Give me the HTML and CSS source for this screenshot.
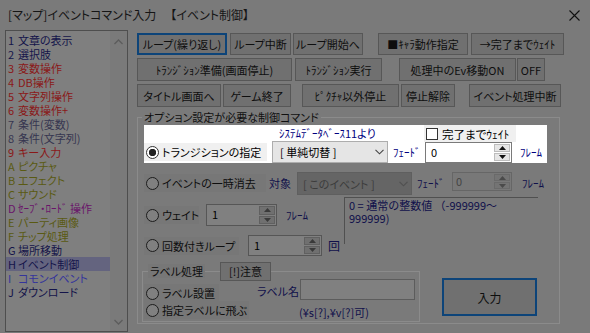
FILE: index.html
```html
<!DOCTYPE html>
<html lang="ja">
<head>
    <meta charset="UTF-8">
    <title>[マップ]イベントコマンド入力</title>
    <link rel="stylesheet" href="styles.css">
</head>
<body>
    <div class="dialog">
        <div class="titlebar">
            <span class="title">[マップ]イベントコマンド入力<span class="sub">【イベント制御】</span></span>
            <svg class="close" width="11" height="11" viewBox="0 0 11 11"><path d="M0.5 0.5L10.5 10.5M10.5 0.5L0.5 10.5" stroke="#111" stroke-width="1.1"/></svg>
        </div>
        <div class="main">
            <div class="cmdlist">
                <ul class="items">
                    <li class="navy"><span class="no">1</span>文章の表示</li>
                    <li class="navy"><span class="no">2</span>選択肢</li>
                    <li class="red"><span class="no">3</span>変数操作</li>
                    <li class="red"><span class="no">4</span>DB操作</li>
                    <li class="red"><span class="no">5</span>文字列操作</li>
                    <li class="red"><span class="no">6</span>変数操作+</li>
                    <li class="slate"><span class="no">7</span>条件(変数)</li>
                    <li class="slate"><span class="no">8</span>条件(文字列)</li>
                    <li class="red"><span class="no">9</span>キー入力</li>
                    <li class="olive"><span class="no">A</span>ピクチャ</li>
                    <li class="olive"><span class="no">B</span>エフェクト</li>
                    <li class="olive"><span class="no">C</span>サウンド</li>
                    <li class="purple"><span class="no">D</span>ｾｰﾌﾞ・ﾛｰﾄﾞ 操作</li>
                    <li class="olive"><span class="no">E</span>パーティ画像</li>
                    <li class="olive"><span class="no">F</span>チップ処理</li>
                    <li class="navy"><span class="no">G</span>場所移動</li>
                    <li class="navy selected"><span class="no">H</span>イベント制御</li>
                    <li class="blue"><span class="no">I</span>コモンイベント</li>
                    <li class="navy"><span class="no">J</span>ダウンロード</li>
                </ul>
                <div class="vscroll">
                    <svg width="9" height="6" viewBox="0 0 9 6"><path d="M0.5 5L4.5 1L8.5 5" fill="none" stroke="#5c5c5c" stroke-width="1.3"/></svg>
                    <svg width="9" height="6" viewBox="0 0 9 6"><path d="M0.5 1L4.5 5L8.5 1" fill="none" stroke="#5c5c5c" stroke-width="1.3"/></svg>
                </div>
            </div>

            <div class="panel">
                <div class="btnrow">
                    <button class="btn focus b-loop">ループ(繰り返し)</button>
                    <button class="btn b-loopbreak">ループ中断</button>
                    <button class="btn b-loopstart">ループ開始へ</button>
                    <button class="btn b-chara">■ｷｬﾗ動作指定</button>
                    <button class="btn b-waitend">→完了までｳｪｲﾄ</button>
                </div>
                <div class="btnrow">
                    <button class="btn b-trprep">ﾄﾗﾝｼﾞｼｮﾝ準備(画面停止)</button>
                    <button class="btn b-trrun">ﾄﾗﾝｼﾞｼｮﾝ実行</button>
                    <button class="btn b-evmove">処理中のEv移動ON</button>
                    <button class="btn b-off">OFF</button>
                </div>
                <div class="btnrow">
                    <button class="btn b-title">タイトル画面へ</button>
                    <button class="btn b-gameend">ゲーム終了</button>
                    <button class="btn b-picstop">ﾋﾟｸﾁｬ以外停止</button>
                    <button class="btn b-unstop">停止解除</button>
                    <button class="btn b-evbreak">イベント処理中断</button>
                </div>

                <fieldset class="options">
                    <legend>オプション設定が必要な制御コマンド</legend>

                    <div class="spot">
                        <label class="radio r-trans"><span class="rb on"></span>トランジションの指定</label>
                        <div class="combo-col">
                            <span class="sysdb">ｼｽﾃﾑﾃﾞｰﾀﾍﾞｰｽ11より</span>
                            <div class="combo">
                                <span>[ 単純切替 ]</span>
                                <svg width="9" height="6" viewBox="0 0 9 6"><path d="M0.5 0.8L4.5 4.8L8.5 0.8" fill="none" stroke="#444" stroke-width="1.1"/></svg>
                            </div>
                        </div>
                        <span class="lbl fade-a">ﾌｪｰﾄﾞ</span>
                        <div class="wait-col">
                            <label class="check"><span class="cb"></span>完了までｳｪｲﾄ</label>
                            <div class="spin s-spot">
                                <span class="val">0</span>
                                <span class="arrows">
                                    <span class="ar"><svg width="7" height="4" viewBox="0 0 7 4"><path d="M0 4L3.5 0L7 4Z" fill="#111"/></svg></span>
                                    <span class="ar"><svg width="7" height="4" viewBox="0 0 7 4"><path d="M0 0L3.5 4L7 0Z" fill="#111"/></svg></span>
                                </span>
                            </div>
                        </div>
                        <span class="lbl frame-a">ﾌﾚｰﾑ</span>
                    </div>

                    <div class="row r-erase">
                        <label class="radio r-hide"><span class="rb"></span>イベントの一時消去</label>
                        <span class="lbl target">対象</span>
                        <div class="combo off">
                            <span>[ このイベント ]</span>
                            <svg width="9" height="6" viewBox="0 0 9 6"><path d="M0.5 0.8L4.5 4.8L8.5 0.8" fill="none" stroke="#505050" stroke-width="1.1"/></svg>
                        </div>
                        <span class="lbl fade-b">ﾌｪｰﾄﾞ</span>
                        <div class="spin off s-fade">
                            <span class="val">0</span>
                            <span class="arrows">
                                <span class="ar"><svg width="7" height="4" viewBox="0 0 7 4"><path d="M0 4L3.5 0L7 4Z" fill="#4a4a4a"/></svg></span>
                                <span class="ar"><svg width="7" height="4" viewBox="0 0 7 4"><path d="M0 0L3.5 4L7 0Z" fill="#4a4a4a"/></svg></span>
                            </span>
                        </div>
                        <span class="lbl frame-b">ﾌﾚｰﾑ</span>
                    </div>

                    <div class="row r-mid">
                        <div class="midcol">
                            <div class="row r-wait">
                                <label class="radio r-w"><span class="rb"></span>ウェイト</label>
                                <div class="spin s-wait">
                                    <span class="val">1</span>
                                    <span class="arrows">
                                        <span class="ar"><svg width="7" height="4" viewBox="0 0 7 4"><path d="M0 4L3.5 0L7 4Z" fill="#3a3a3a"/></svg></span>
                                        <span class="ar"><svg width="7" height="4" viewBox="0 0 7 4"><path d="M0 0L3.5 4L7 0Z" fill="#3a3a3a"/></svg></span>
                                    </span>
                                </div>
                                <span class="lbl frame-c">ﾌﾚｰﾑ</span>
                            </div>
                            <div class="row r-loop">
                                <label class="radio r-l"><span class="rb"></span>回数付きループ</label>
                                <div class="spin s-loop">
                                    <span class="val">1</span>
                                    <span class="arrows">
                                        <span class="ar"><svg width="7" height="4" viewBox="0 0 7 4"><path d="M0 4L3.5 0L7 4Z" fill="#3a3a3a"/></svg></span>
                                        <span class="ar"><svg width="7" height="4" viewBox="0 0 7 4"><path d="M0 0L3.5 4L7 0Z" fill="#3a3a3a"/></svg></span>
                                    </span>
                                </div>
                                <span class="lbl times">回</span>
                            </div>
                        </div>
                        <div class="note">0 = 通常の整数値 （-999999～<br>999999)</div>
                    </div>

                    <div class="row r-bottom">
                        <fieldset class="labels">
                            <legend><span class="lg-text">ラベル処理</span><span class="lg-line"></span><button class="btn b-warn">[!]注意</button></legend>
                            <div class="row r-set">
                                <label class="radio r-ls"><span class="rb"></span>ラベル設置</label>
                                <span class="lbl lname">ラベル名</span>
                                <span class="textbox"></span>
                            </div>
                            <div class="row r-jump">
                                <label class="radio r-lj"><span class="rb"></span>指定ラベルに飛ぶ</label>
                                <span class="lbl hint">(¥s[?],¥v[?]可)</span>
                            </div>
                        </fieldset>
                        <button class="btn focus b-enter">入力</button>
                    </div>
                </fieldset>
            </div>
        </div>
    </div>
</body>
</html>
```

FILE: styles.css
```css
* {
    box-sizing: border-box;
}
body {
    margin: 0;
    width: 590px;
    height: 333px;
    overflow: hidden;
    background: #7a7a7a;
    font-family: "Noto Sans CJK JP", "Noto Sans", sans-serif;
    font-size: 11px;
    font-feature-settings: "palt";
    color: #0e0e0e;
}
.titlebar {
    height: 30px;
    display: flex;
    align-items: center;
    justify-content: space-between;
    padding: 0 10px 0 8px;
}
.title {
    font-size: 12px;
    line-height: 16px;
    color: #151515;
}
.title .sub {
    margin-left: 14px;
}
.close {
    display: block;
}
.main {
    display: flex;
    padding-left: 5px;
}

/* command list */
.cmdlist {
    width: 123px;
    height: 302px;
    border: 1px solid #4e4e4e;
    background: #7f7f7f;
    display: flex;
}
.items {
    list-style: none;
    margin: 0;
    padding: 2px 0 0 0;
    flex: 1;
}
.items li {
    height: 14px;
    line-height: 14px;
    padding-left: 2px;
    font-size: 11px;
    white-space: nowrap;
}
.items .no {
    display: inline-block;
    width: 10px;
}
.items .navy { color: #14144a; }
.items .red { color: #8a1818; }
.items .slate { color: #363650; }
.items .olive { color: #5a5a12; }
.items .purple { color: #6a146a; }
.items .blue { color: #34349c; }
.items .selected {
    background: #64647f;
}
.vscroll {
    width: 17px;
    background: #7a7a7a;
    display: flex;
    flex-direction: column;
    justify-content: space-between;
    align-items: center;
    padding: 8px 0 6px;
}
.vscroll svg {
    display: block;
}

/* right side */
.panel {
    margin-left: 9px;
    width: 427px;
    padding-top: 3px;
}
.btnrow {
    display: flex;
    height: 22px;
    margin-bottom: 3px;
}
.btnrow + .btnrow {
    height: 23px;
}
.btnrow:nth-child(3) {
    margin-top: 1px;
}
.btn {
    font: inherit;
    font-feature-settings: "palt";
    color: #0e0e0e;
    height: 100%;
    padding: 0;
    border: 1px solid #575757;
    background: #707070;
    white-space: nowrap;
}
.btn.focus {
    border: 2px solid #0d4479;
}
.b-loop { width: 90px; }
.b-loopbreak { width: 61px; margin-left: 3px; }
.b-loopstart { width: 70px; margin-left: 2px; }
.b-chara { width: 90px; margin-left: 15px; }
.b-waitend { width: 93px; margin-left: 3px; }
.b-trprep { width: 155px; }
.b-trrun { width: 87px; margin-left: 3px; }
.b-evmove { width: 117px; margin-left: 17px; }
.b-off { width: 28px; margin-left: 1px; }
.b-title { width: 84px; }
.b-gameend { width: 68px; margin-left: 2px; }
.b-picstop { width: 97px; margin-left: 11px; }
.b-unstop { width: 54px; margin-left: 2px; }
.b-evbreak { width: 92px; margin-left: 14px; }

/* option group */
.options {
    margin: 0;
    width: 423px;
    border: 1px solid #8b8b8b;
    padding: 0 0 1px 4px;
    min-width: 0;
}
.options > legend {
    padding: 0 2px;
    height: 14px;
    line-height: 14px;
    color: #101010;
}
.row {
    display: flex;
}
.lbl {
    color: #10104a;
    line-height: 14px;
    white-space: nowrap;
}

.radio {
    display: flex;
    align-items: center;
    height: 18px;
    background: #777777;
    white-space: nowrap;
}
.rb {
    width: 13px;
    height: 13px;
    border: 1px solid #1c1c1c;
    border-radius: 50%;
    background: #808080;
    margin: 0 3px 0 2px;
    flex: none;
}

/* highlighted row */
.spot {
    margin: 1px 0 0 2px;
    width: 403px;
    height: 38px;
    background: #fff;
    display: flex;
    align-items: flex-end;
}
.spot .lbl {
    color: #000080;
}
.r-trans {
    width: 123px;
    margin-bottom: 2px;
    background: #f0f0f0;
    color: #000;
}
.spot .rb {
    background: #fff;
    border-color: #333;
}
.rb.on {
    background: radial-gradient(circle, #222 3.4px, #fff 4px);
}
.combo-col {
    margin-left: 5px;
    width: 116px;
    height: 38px;
    display: flex;
    flex-direction: column;
}
.sysdb {
    height: 16px;
    line-height: 16px;
    padding-left: 7px;
    font-size: 11px;
    color: #000080;
    white-space: nowrap;
}
.combo {
    height: 22px;
    border: 1px solid #adadad;
    background: #e5e5e5;
    display: flex;
    align-items: center;
    justify-content: space-between;
    padding: 0 3px 0 7px;
    color: #000;
    white-space: nowrap;
}
.combo svg {
    display: block;
}
.fade-a {
    width: 31px;
    margin-left: 5px;
    margin-bottom: 4px;
}
.wait-col {
    width: 92px;
    height: 38px;
    display: flex;
    flex-direction: column;
}
.check {
    height: 17px;
    background: #f0f0f0;
    display: flex;
    align-items: center;
    color: #000;
    white-space: nowrap;
    font-size: 11.5px;
}
.cb {
    width: 12px;
    height: 12px;
    border: 1px solid #333;
    background: #fff;
    margin: 0 4px 0 2px;
}
.spin {
    display: flex;
    height: 21px;
    border: 1px solid #565656;
    background: #808080;
}
.s-spot {
    width: 87px;
    margin-left: 1px;
    border-color: #7a7a7a;
    background: #fff;
}
.spin .val {
    flex: 1;
    padding-left: 5px;
    line-height: 19px;
    color: #000;
}
.arrows {
    width: 17px;
    display: flex;
    flex-direction: column;
    padding: 1px 1px 1px 0;
    gap: 1px;
}
.ar {
    flex: 1;
    display: flex;
    align-items: center;
    justify-content: center;
    background: #707070;
    border: 1px solid #606060;
}
.s-spot .ar {
    background: #e6e6e6;
    border-color: #bdbdbd;
}
.ar svg {
    display: block;
}
.frame-a {
    margin-left: 4px;
    margin-bottom: 4px;
}

/* event erase row */
.r-erase {
    margin: 9px 0 0 2px;
    height: 23px;
    align-items: flex-start;
}
.r-hide {
    width: 122px;
    margin-top: 2px;
}
.target {
    width: 28px;
    margin-left: 3px;
    margin-top: 4px;
}
.combo.off {
    width: 115px;
    height: 23px;
    border-color: #5f5f5f;
    background: #656565;
    color: #3c3c3c;
    padding-left: 5px;
}
.fade-b {
    width: 35px;
    margin-left: 5px;
    margin-top: 4px;
}
.spin.off {
    background: #787878;
    border-color: #666;
    color: #404040;
}
.spin.off .val {
    color: #444;
    padding-left: 3px;
}
.spin.off .ar {
    background: #747474;
    border-color: #6a6a6a;
}
.s-fade {
    width: 60px;
    height: 19px;
}
.s-fade .val {
    line-height: 17px;
}
.frame-b {
    margin-left: 10px;
    margin-top: 4px;
}

/* wait / loop rows */
.r-mid {
    margin: 2px 0 0 2px;
}
.midcol {
    width: 200px;
}
.r-wait {
    margin-top: 7px;
    height: 22px;
    align-items: center;
}
.r-w { width: 55px; }
.s-wait {
    width: 71px;
    height: 22px;
    margin-left: 7px;
}
.frame-c {
    margin-left: 9px;
}
.r-loop {
    margin-top: 9px;
    height: 21px;
    align-items: center;
}
.r-l { width: 95px; }
.s-loop {
    width: 74px;
    margin-left: 9px;
}
.times {
    margin-left: 6px;
    font-size: 12px;
}
.note {
    width: 194px;
    height: 47px;
    border-left: 1px solid #505050;
    border-top: 1px solid #505050;
    padding: 1px 0 0 4px;
    line-height: 13px;
    color: #10104a;
    white-space: nowrap;
    font-feature-settings: normal;
}

/* label group + enter */
.r-bottom {
    margin-top: 8px;
    align-items: flex-start;
}
.labels {
    margin: 0;
    width: 278px;
    border: 1px solid #8b8b8b;
    padding: 0 0 2px 1px;
    min-width: 0;
}
.labels > legend {
    margin-left: 4px;
    padding: 0;
    height: 14px;
    display: flex;
    align-items: center;
}
.lg-text {
    padding: 0 2px;
    line-height: 14px;
    background: #777777;
}
.lg-line {
    width: 15px;
    border-top: 1px solid #8b8b8b;
}
.b-warn {
    width: 51px;
    height: 19px;
    margin: -2px 0 -3px;
    line-height: 17px;
}
.r-set {
    height: 23px;
    align-items: flex-start;
}
.r-ls {
    width: 75px;
    margin-top: 6px;
}
.lname {
    width: 43px;
    margin-left: 38px;
    margin-top: 6px;
}
.textbox {
    width: 115px;
    height: 21px;
    margin-top: 1px;
    border: 1px solid #5c5c5c;
    background: #808080;
}
.r-jump {
    height: 18px;
    align-items: flex-start;
}
.r-lj { width: 105px; }
.hint {
    margin-left: 50px;
    margin-top: 4px;
}
.b-enter {
    width: 95px;
    height: 38px;
    margin: 14px 0 0 22px;
    font-size: 12px;
}
```
